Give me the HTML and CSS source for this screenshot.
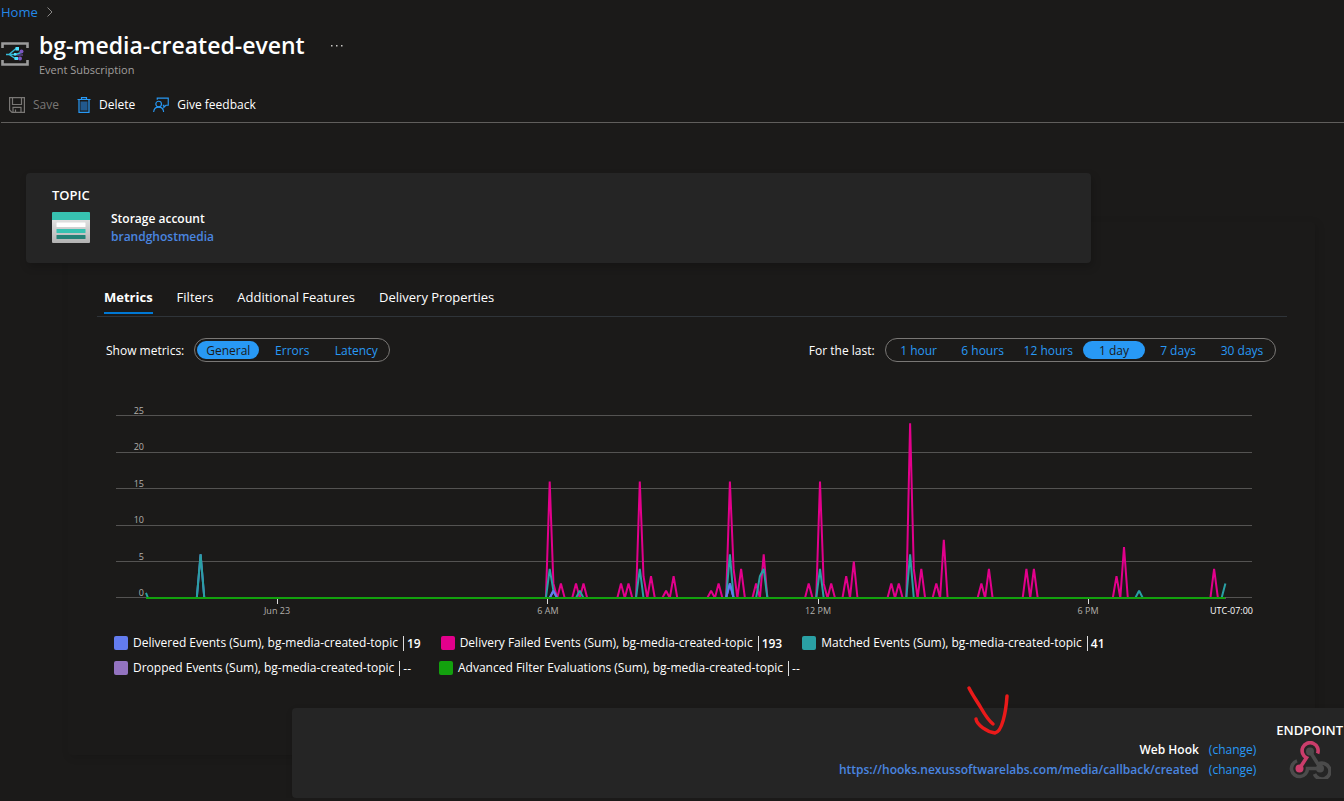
FILE: index.html
```html
<!DOCTYPE html>
<html lang="en">
<head>
<meta charset="utf-8">
<title>bg-media-created-event</title>
<link rel="stylesheet" href="styles.css">
</head>
<body>
<header class="header">
  <nav class="crumbs" aria-label="Breadcrumb">
    <a href="#">Home</a>
    <svg width="8" height="12" viewBox="0 0 8 12" aria-hidden="true"><path d="M1.500 1.500 6 6 1.500 10.500" fill="none" stroke="#8a8886"/></svg>
  </nav>
  <div class="heading">
    <svg class="heading-icon" width="28" height="26" viewBox="0 0 28 26" aria-hidden="true">
      <path d="M1.500 7V2.500h25V7M1.500 19v4.500h25V19" fill="none" stroke="#9b9b9b" stroke-width="2.600"/>
      <path d="M5 13.500h3l7-6M8 13.500l7 4.500M9 13.500h6l5-2" fill="none" stroke="#35b8d6" stroke-width="1.400"/>
      <path d="M14.500 6h3.500v3.500h-3.500zM13 12h2.500v2.500H13zM13.500 16h3.500v3h-3.500z" fill="#50e0ff"/>
      <circle cx="20.500" cy="10.500" r="2" fill="#7c57c2"/><circle cx="19" cy="17.500" r="2" fill="#7c57c2"/>
      <path d="M16 14h6" stroke="#7c57c2"/>
    </svg>
    <div class="heading-text">
      <h1>bg-media-created-event</h1>
      <p>Event Subscription</p>
    </div>
    <button class="more" aria-label="More">
      <svg width="12" height="2" viewBox="0 0 12 2" aria-hidden="true"><path d="M0 0h1.500v1.500H0zM5 0h1.500v1.500H5zM10 0h1.500v1.500H10z" fill="#c8c6c4"/></svg>
    </button>
  </div>
  <div class="toolbar">
    <button disabled>
      <svg width="16" height="16" viewBox="0 0 16 16" aria-hidden="true" fill="none" stroke="#797775" stroke-width="1.200"><path d="M.6.6h14.800v14.800H3L.6 13zM3.500.6v6.900h9V.6M4 15.400v-5h8v5M6.500 15v-2.500"/></svg>
      Save
    </button>
    <button>
      <svg width="14" height="16" viewBox="0 0 14 16" aria-hidden="true"><path d="M3.500 4.500h7v9h-7z" fill="#22598d"/><path d="M.5 2.500h13M4.500 2.300V.6h5v1.700M2 2.500v12.900h10V2.500" fill="none" stroke="#2899f5" stroke-width="1.200"/></svg>
      Delete
    </button>
    <button>
      <svg width="16" height="16" viewBox="0 0 17 16" aria-hidden="true" fill="none" stroke="#2899f5" stroke-width="1.200"><circle cx="6" cy="7" r="3"/><path d="M.7 15.500c.3-3.400 2.300-5.200 5.300-5.200s5 1.800 5.300 5.200M4.500 2.500V.7h11.700v7.600h-2.500l-2.200 2.200V8.300h-1.200"/></svg>
      Give feedback
    </button>
  </div>
</header>

<main class="content">
  <section class="card topic">
    <h2>TOPIC</h2>
    <div class="topic-body">
      <svg width="38" height="31" viewBox="0 0 38 31" aria-hidden="true">
        <defs><linearGradient id="body" x1="0" y1="0" x2="0" y2="1"><stop offset="0" stop-color="#e2e2e2"/><stop offset="1" stop-color="#b2b2b2"/></linearGradient></defs>
        <rect y="7" width="38" height="24" rx="1" fill="url(#body)"/>
        <path d="M0 1q0-1 1-1h36q1 0 1 1v7H0z" fill="#37c2b1"/>
        <rect x="4.500" y="10.500" width="29" height="4.500" rx=".6" fill="#fff"/>
        <rect x="4.500" y="17" width="29" height="4" rx=".6" fill="#37c2b1"/>
        <rect x="4.500" y="23" width="29" height="4" rx=".6" fill="#258277"/>
      </svg>
      <div class="topic-text">
        <strong>Storage account</strong>
        <a class="resource" href="#">brandghostmedia</a>
      </div>
    </div>
  </section>

  <section class="panel">
    <div class="tabs" role="tablist">
      <button role="tab" aria-selected="true">Metrics</button>
      <button role="tab" aria-selected="false">Filters</button>
      <button role="tab" aria-selected="false">Additional Features</button>
      <button role="tab" aria-selected="false">Delivery Properties</button>
    </div>
    <div class="filters">
      <span id="metrics-label" class="filter-label">Show metrics:</span>
      <div class="pills" role="group" aria-labelledby="metrics-label">
        <button aria-pressed="true">General</button>
        <button aria-pressed="false">Errors</button>
        <button aria-pressed="false">Latency</button>
      </div>
      <span id="range-label" class="filter-label range-label">For the last:</span>
      <div class="pills" role="group" aria-labelledby="range-label">
        <button aria-pressed="false">1 hour</button>
        <button aria-pressed="false">6 hours</button>
        <button aria-pressed="false">12 hours</button>
        <button aria-pressed="true">1 day</button>
        <button aria-pressed="false">7 days</button>
        <button aria-pressed="false">30 days</button>
      </div>
    </div>
    <svg class="chart" viewBox="0 0 1138 220" role="img" aria-label="Event metrics for the last day">
      <path class="grid" d="M0 15.500h1136M0 52.500h1136M0 88.500h1136M0 125.500h1136M0 161.500h1136M0 197.500h1136"/>
      <g class="axis" text-anchor="end">
        <text x="28" y="14">25</text><text x="28" y="50">20</text><text x="28" y="87">15</text>
        <text x="28" y="123">10</text><text x="28" y="160">5</text><text x="28" y="196">0</text>
      </g>
      <g id="series" class="series"></g>
      <path class="ticks" d="M161.500 199v5M431.500 199v5M702.500 199v5M972.500 199v5"/>
      <g class="axis" text-anchor="middle">
        <text x="161" y="214">Jun 23</text><text x="432" y="214">6 AM</text>
        <text x="702" y="214">12 PM</text><text x="972" y="214">6 PM</text>
      </g>
      <text class="zone" x="1137" y="214" text-anchor="end">UTC-07:00</text>
    </svg>
    <ul class="legend">
      <li><i class="swatch delivered"></i><span>Delivered Events (Sum), bg-media-created-topic</span><b>19</b></li>
      <li><i class="swatch failed"></i><span>Delivery Failed Events (Sum), bg-media-created-topic</span><b>193</b></li>
      <li><i class="swatch matched"></i><span>Matched Events (Sum), bg-media-created-topic</span><b>41</b></li>
    </ul>
    <ul class="legend legend-empty">
      <li><i class="swatch dropped"></i><span>Dropped Events (Sum), bg-media-created-topic</span><em>--</em></li>
      <li><i class="swatch advanced"></i><span>Advanced Filter Evaluations (Sum), bg-media-created-topic</span><em>--</em></li>
    </ul>
  </section>

  <section class="card endpoint">
    <svg class="arrow" width="44" height="52" viewBox="0 0 44 52" aria-hidden="true"><path d="M4 4C8 12 12 17 16 24 20 31 23 36 28 40M11 35C12 41 22 48 30 49 37 48 41 28 42 12" fill="none" stroke="#ea1a1a" stroke-width="3.500" stroke-linecap="round" stroke-linejoin="round"/></svg>
    <dl class="endpoint-info">
      <dt>Web Hook</dt><dd><a href="#">(change)</a></dd>
      <dt><a class="resource" href="#">https://hooks.nexussoftwarelabs.com/media/callback/created</a></dt><dd><a href="#">(change)</a></dd>
    </dl>
    <div class="endpoint-type">
      <h2>ENDPOINT</h2>
      <svg width="42" height="38" viewBox="0 0 42 38" aria-hidden="true" fill="none" stroke-width="3.600">
        <path d="M21 10.500 29 23.200A8 8 0 1 1 25.500 33M31 27.500H18.500A8 8 0 1 1 8 19.900" stroke="#4b4b4b"/>
        <circle cx="21" cy="10.500" r="4" fill="#4b4b4b" stroke="none"/><circle cx="31" cy="27.500" r="4" fill="#4b4b4b" stroke="none"/>
        <path d="M10.500 27.500 17.500 16.800A8 8 0 1 1 28.600 12.500" stroke="#ca3d6b"/>
        <circle cx="10.500" cy="27.500" r="4" fill="#ca3d6b" stroke="none"/>
      </svg>
    </div>
  </section>
</main>
<script src="chart.js"></script>
</body>
</html>
```

FILE: styles.css
```css
* { box-sizing: border-box; }
body {
  margin: 0;
  background: #1b1a19;
  color: #fff;
  font: 12px/18px "Open Sans", "Noto Sans", sans-serif;
  overflow-x: hidden;
}
h1, h2, p, ul, dl, dd { margin: 0; padding: 0; }
a { color: #2899f5; text-decoration: none; }
button { border: 0; padding: 0; background: none; color: inherit; font: inherit; }
svg { flex: none; display: block; }

.header { border-bottom: 1px solid #605e5c; margin-left: 1px; }
.crumbs { display: flex; align-items: center; gap: 8px; height: 24px; font-size: 13px; }
.crumbs a { color: #2488e8; }
.heading { display: flex; align-items: flex-start; height: 64px; padding-top: 5px; }
.heading-icon { margin-top: 12px; }
.heading-text { margin-left: 10px; }
.heading h1 { font-size: 23px; line-height: 32px; font-weight: 600; }
.heading p { color: #a19f9d; font-size: 11px; line-height: 18px; }
.more { margin: 16px 0 0 26px; }
.toolbar { display: flex; gap: 18px; height: 34px; padding-left: 8px; }
.toolbar button { display: flex; align-items: center; gap: 8px; }
.toolbar button:disabled { color: #797775; }

.content { display: flex; flex-direction: column; padding-top: 50px; }
.card { position: relative; height: 90px; background: #252525; border-radius: 4px; box-shadow: 2px 4px 8px #0003; }
h2 { font-size: 13px; line-height: 18px; font-weight: 600; }
.topic { margin: 0 253px 0 26px; padding: 13px 26px; z-index: 1; }
.topic-body { display: flex; gap: 21px; align-items: center; margin-top: 4px; }
.topic-text { padding-top: 2px; }
strong { display: block; font-weight: 600; }
.resource { color: #4a86e0; font-weight: 600; }

.panel { margin: -41px 29px 0 68px; height: 533px; padding: 60px 28px 0 29px; box-shadow: 2px 2px 8px #0002; border-radius: 4px; }
.tabs { display: flex; gap: 24px; height: 35px; padding-left: 7px; border-bottom: 1px solid #2f3439; font-size: 13px; }
.tabs button { height: 32px; border-bottom: 2px solid transparent; }
.tabs button[aria-selected="true"] { border-color: #0078d4; font-weight: 700; }
.filters { display: flex; align-items: center; padding: 21px 11px 0 9px; }
.filter-label { padding-top: 2px; }
.pills { display: flex; align-items: center; gap: 2px; height: 24px; margin-left: 10px; padding: 0 2px; border: 1px solid #797775; border-radius: 12px; }
.pills button { min-width: 62px; height: 18px; padding: 1px 8px 0; border-radius: 9px; color: #2899f5; }
.pills button[aria-pressed="true"] { background: #2899f5; color: #1b1a19; }
.range-label { margin-left: auto; }

.chart { width: calc(100% - 52px); margin: 38px 0 0 19px; }
.grid { stroke: #545352; }
.ticks { stroke: #dddddd; }
.axis { fill: #b3b0ad; font-size: 9px; }
.zone { fill: #fff; font-size: 9px; }
.series { fill: none; stroke-width: 2; }
.legend { display: flex; gap: 20px; height: 25px; margin-left: 17px; padding-top: 4px; list-style: none; }
.legend-empty { gap: 28px; }
.chart + .legend { margin-top: 10px; }
.legend li { display: flex; align-items: center; height: 18px; white-space: nowrap; }
.legend span { margin: 0 5px; }
.legend b, .legend em { border-left: 1px solid #ddd; padding-left: 3px; height: 15px; line-height: 16px; font-style: normal; }
.legend b { font-weight: 600; }
.swatch { width: 14px; height: 14px; border-radius: 2px; }
.delivered { background: #637cef; }
.failed { background: #e3008c; }
.matched { background: #2aa0a4; }
.dropped { background: #9373c0; }
.advanced { background: #13a10e; }

.endpoint { display: flex; justify-content: flex-end; gap: 20px; margin: -47px 0 0 292px; padding: 13px 1px 0 0; border-radius: 4px 0 0 4px; }
.endpoint-info { display: grid; grid-template-columns: auto auto; column-gap: 10px; align-content: start; padding-top: 19px; line-height: 20px; text-align: right; }
dt { font-weight: 600; }
.endpoint-type { display: flex; flex-direction: column; align-items: center; gap: 2px; }
.arrow { position: absolute; top: -24px; right: 335px; }
```

FILE: chart.js
```js
// Each entry is [five-minute bucket, event count]; other buckets are zero.
const BUCKETS = 287;
const series = [
  { color: '#637cef', data: [[14, 6], [108, 1], [155, 2]] },
  { color: '#e3008c', data: [
    [107, 16], [108, 2], [110, 2], [114, 2], [116, 2], [126, 2], [128, 2],
    [131, 16], [132, 3], [134, 3], [138, 1], [140, 3], [150, 1], [152, 2],
    [155, 16], [156, 4], [158, 4], [162, 2], [164, 6], [176, 2],
    [179, 16], [180, 2], [182, 2], [186, 3], [188, 5], [198, 2], [200, 2],
    [203, 24], [204, 4], [206, 4], [210, 2], [212, 8], [222, 2], [224, 4],
    [234, 4], [236, 4], [258, 3], [260, 7], [284, 4]] },
  { color: '#2aa0a4', data: [
    [14, 6], [107, 4], [108, 1], [115, 1], [131, 4], [155, 6],
    [163, 3], [164, 4], [179, 4], [203, 6], [264, 1], [287, 2]] },
  { color: '#637cef', sparse: true, data: [[108, 1], [155, 2]] },
  { color: '#13a10e', data: [] }
];
const group = document.getElementById('series');
const x = i => (32 + i * 3.754).toFixed(1);
const y = v => (198 - v * 7.28).toFixed(1);
for (const s of series) {
  const path = document.createElementNS('http://www.w3.org/2000/svg', 'path');
  const values = new Map(s.data);
  let d = '';
  if (s.sparse) {
    for (const [i, v] of s.data) d += `M${x(i - 1)} ${y(0)}L${x(i)} ${y(v)}L${x(i + 1)} ${y(0)}`;
  } else {
    // The window opens partway through a bucket, just left of bucket 0.
    d = `M30 ${y(s.color === '#2aa0a4' ? 0.7 : 0)}`;
    for (let i = 0; i <= BUCKETS; i++) d += `L${x(i)} ${y(values.get(i) || 0)}`;
  }
  path.setAttribute('d', d);
  path.setAttribute('stroke', s.color);
  path.setAttribute('stroke-linejoin', 'bevel');
  group.append(path);
}
```
